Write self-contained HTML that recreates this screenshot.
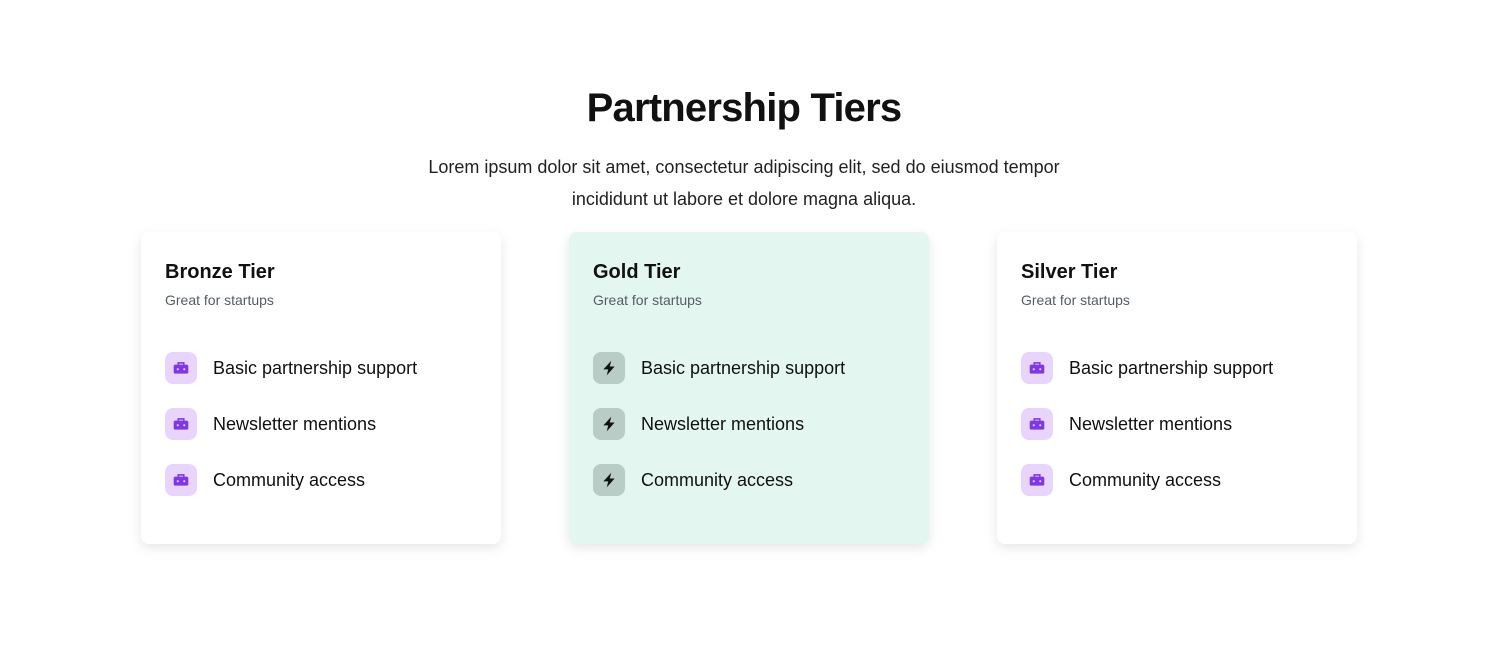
<!DOCTYPE html>
<html><head><style>
body{margin:0;background:#fff;font-family:"Liberation Sans",sans-serif;color:#111;width:1488px;height:671px;overflow:hidden}
h1{position:absolute;top:84px;left:0;width:1488px;text-align:center;margin:0;font-size:40px;line-height:48px;font-weight:700;letter-spacing:-0.8px}
p.sub{position:absolute;top:151px;left:394px;width:700px;text-align:center;margin:0;font-size:18px;line-height:32px;color:#222}
.card{position:absolute;top:232px;width:360px;height:312px;border-radius:8px;background:#fff;box-shadow:0 4px 12px rgba(0,0,0,.1);box-sizing:border-box;padding:26px 24px}
.card h3{margin:0;font-size:20px;line-height:28px;font-weight:700}
.card .s{font-size:14px;color:#555c66;margin-top:4px;line-height:20px}
ul{list-style:none;margin:42px 0 0;padding:0}
li{display:flex;align-items:center;height:32px;margin-bottom:24px;font-size:18px}
.ic{width:32px;height:32px;border-radius:8px;background:#e9d5fb;margin-right:16px;display:flex;align-items:center;justify-content:center}
.g .ic{background:#b9ccc5}
</style></head><body>
<h1>Partnership Tiers</h1>
<p class="sub">Lorem ipsum dolor sit amet, consectetur adipiscing elit, sed do eiusmod tempor incididunt ut labore et dolore magna aliqua.</p>
<div class="card" style="left:141px"><h3>Bronze Tier</h3><div class="s">Great for startups</div><ul>
<li><span class="ic"><svg width="18" height="18" viewBox="0 0 16 16"><path d="M5.5 5V3.5h5V5" fill="none" stroke="#7e3ae0" stroke-width="1.4"/><rect x="1.5" y="5" width="13" height="8" rx="1.5" fill="#7e3ae0"/><rect x="4.3" y="8.3" width="1.6" height="1.6" fill="#e9d5fb"/><rect x="10.1" y="8.3" width="1.6" height="1.6" fill="#e9d5fb"/></svg></span>Basic partnership support</li>
<li><span class="ic"><svg width="18" height="18" viewBox="0 0 16 16"><path d="M5.5 5V3.5h5V5" fill="none" stroke="#7e3ae0" stroke-width="1.4"/><rect x="1.5" y="5" width="13" height="8" rx="1.5" fill="#7e3ae0"/><rect x="4.3" y="8.3" width="1.6" height="1.6" fill="#e9d5fb"/><rect x="10.1" y="8.3" width="1.6" height="1.6" fill="#e9d5fb"/></svg></span>Newsletter mentions</li>
<li><span class="ic"><svg width="18" height="18" viewBox="0 0 16 16"><path d="M5.5 5V3.5h5V5" fill="none" stroke="#7e3ae0" stroke-width="1.4"/><rect x="1.5" y="5" width="13" height="8" rx="1.5" fill="#7e3ae0"/><rect x="4.3" y="8.3" width="1.6" height="1.6" fill="#e9d5fb"/><rect x="10.1" y="8.3" width="1.6" height="1.6" fill="#e9d5fb"/></svg></span>Community access</li>
</ul></div>
<div class="card g" style="left:569px;background:#e3f6ef"><h3>Gold Tier</h3><div class="s">Great for startups</div><ul>
<li><span class="ic"><svg width="18" height="18" viewBox="0 0 16 16"><path d="M10 1.5L3 9.2h4.3L6 14.5l7-7.8H8.7z" fill="#111"/></svg></span>Basic partnership support</li>
<li><span class="ic"><svg width="18" height="18" viewBox="0 0 16 16"><path d="M10 1.5L3 9.2h4.3L6 14.5l7-7.8H8.7z" fill="#111"/></svg></span>Newsletter mentions</li>
<li><span class="ic"><svg width="18" height="18" viewBox="0 0 16 16"><path d="M10 1.5L3 9.2h4.3L6 14.5l7-7.8H8.7z" fill="#111"/></svg></span>Community access</li>
</ul></div>
<div class="card" style="left:997px"><h3>Silver Tier</h3><div class="s">Great for startups</div><ul>
<li><span class="ic"><svg width="18" height="18" viewBox="0 0 16 16"><path d="M5.5 5V3.5h5V5" fill="none" stroke="#7e3ae0" stroke-width="1.4"/><rect x="1.5" y="5" width="13" height="8" rx="1.5" fill="#7e3ae0"/><rect x="4.3" y="8.3" width="1.6" height="1.6" fill="#e9d5fb"/><rect x="10.1" y="8.3" width="1.6" height="1.6" fill="#e9d5fb"/></svg></span>Basic partnership support</li>
<li><span class="ic"><svg width="18" height="18" viewBox="0 0 16 16"><path d="M5.5 5V3.5h5V5" fill="none" stroke="#7e3ae0" stroke-width="1.4"/><rect x="1.5" y="5" width="13" height="8" rx="1.5" fill="#7e3ae0"/><rect x="4.3" y="8.3" width="1.6" height="1.6" fill="#e9d5fb"/><rect x="10.1" y="8.3" width="1.6" height="1.6" fill="#e9d5fb"/></svg></span>Newsletter mentions</li>
<li><span class="ic"><svg width="18" height="18" viewBox="0 0 16 16"><path d="M5.5 5V3.5h5V5" fill="none" stroke="#7e3ae0" stroke-width="1.4"/><rect x="1.5" y="5" width="13" height="8" rx="1.5" fill="#7e3ae0"/><rect x="4.3" y="8.3" width="1.6" height="1.6" fill="#e9d5fb"/><rect x="10.1" y="8.3" width="1.6" height="1.6" fill="#e9d5fb"/></svg></span>Community access</li>
</ul></div>
</body></html>
